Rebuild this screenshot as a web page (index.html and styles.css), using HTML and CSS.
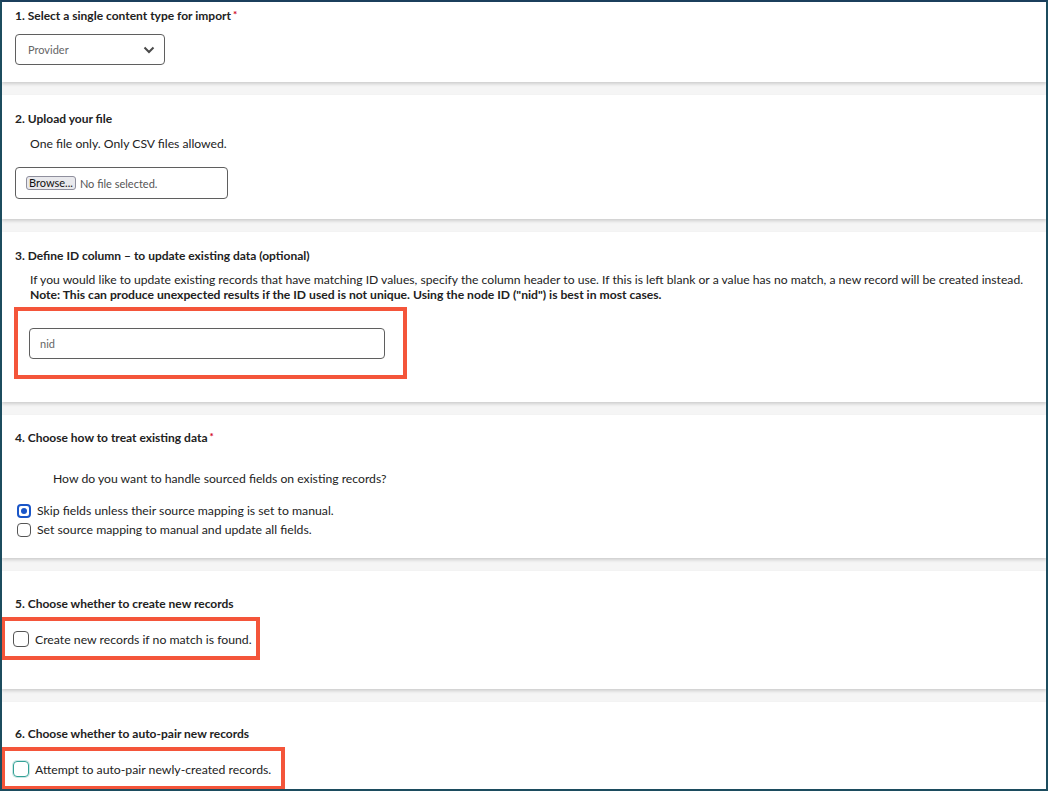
FILE: index.html
```html
<!DOCTYPE html>
<html lang="en">
<head>
  <meta charset="UTF-8">
  <title>Import content</title>
  <link rel="stylesheet" href="styles.css">
</head>
<body>
  <div class="frame">
    <section class="step step-1">
      <h2>1. Select a single content type for import<span class="req">*</span></h2>
      <div class="select">
        <span>Provider</span>
        <svg width="12" height="8" viewBox="0 0 12 8"><polyline points="1.5,1.5 6,6 10.5,1.5" fill="none" stroke="#4a4a4a" stroke-width="2"/></svg>
      </div>
    </section>

    <section class="step step-2">
      <h2>2. Upload your file</h2>
      <p class="help">One file only. Only CSV files allowed.</p>
      <div class="file">
        <span class="browse">Browse...</span>
        <span class="nofile">No file selected.</span>
      </div>
    </section>

    <section class="step step-3">
      <h2>3. Define ID column – to update existing data (optional)</h2>
      <p class="desc">If you would like to update existing records that have matching ID values, specify the column header to use. If this is left blank or a value has no match, a new record will be created instead.<br><strong>Note: This can produce unexpected results if the ID used is not unique. Using the node ID ("nid") is best in most cases.</strong></p>
      <div class="mark mark-input">
        <div class="text-input">nid</div>
      </div>
    </section>

    <section class="step step-4">
      <h2>4. Choose how to treat existing data<span class="req">*</span></h2>
      <p class="question">How do you want to handle sourced fields on existing records?</p>
      <label class="option"><span class="box radio checked"></span>Skip fields unless their source mapping is set to manual.</label>
      <label class="option"><span class="box radio"></span>Set source mapping to manual and update all fields.</label>
    </section>

    <section class="step step-5">
      <h2>5. Choose whether to create new records</h2>
      <div class="mark mark-check mark-create">
        <label class="option"><span class="box"></span>Create new records if no match is found.</label>
      </div>
    </section>

    <section class="step step-6">
      <h2>6. Choose whether to auto-pair new records</h2>
      <div class="mark mark-check mark-pair">
        <label class="option"><span class="box focus"></span>Attempt to auto-pair newly-created records.</label>
      </div>
    </section>
  </div>
</body>
</html>
```

FILE: styles.css
```css
html, body {
  margin: 0;
  padding: 0;
  background: #fff;
}
body {
  font-family: 'Lato', 'Liberation Sans', sans-serif;
  color: #222;
  width: 1049px;
  height: 791px;
  overflow: hidden;
}
.frame {
  box-sizing: border-box;
  width: 1048px;
  height: 791px;
  border: 2px solid #1c4c5e;
  border-top-color: #1b3f5c;
  background: #f5f5f5;
  overflow: hidden;
}
.step {
  background: #fff;
  padding: 0 13px;
  margin-bottom: 13px;
  box-sizing: border-box;
  box-shadow: 0 2px 3px rgba(0, 0, 0, 0.16);
}
.step h2 {
  font-size: 12px;
  line-height: 14px;
  font-weight: 700;
  margin: 0;
  color: #222;
}
.req {
  color: #d0021b;
  font-size: 10px;
  margin-left: 2px;
  vertical-align: 2px;
}
.step-1 {
  height: 80px;
  padding-top: 5px;
}
.select {
  margin-top: 11px;
  width: 150px;
  height: 31px;
  box-sizing: border-box;
  border: 1px solid #5f5f5f;
  border-radius: 4px;
  display: flex;
  align-items: center;
  justify-content: space-between;
  padding: 0 9px 0 12px;
  font-size: 11px;
  color: #666;
}
.step-2 {
  height: 124px;
  padding-top: 17px;
}
.help {
  font-size: 12.2px;
  line-height: 16px;
  margin: 10px 0 0 15px;
}
.file {
  margin-top: 15px;
  width: 213px;
  height: 32px;
  box-sizing: border-box;
  border: 1px solid #5f5f5f;
  border-radius: 4px;
  display: flex;
  align-items: center;
  padding-left: 10px;
  font-size: 11px;
}
.browse {
  background: #e9e9ed;
  border: 1px solid #8f8f9d;
  border-radius: 3px;
  padding: 0 2px;
  line-height: 12px;
  color: #111;
}
.nofile {
  margin-left: 4px;
  color: #555;
}
.step-3 {
  height: 170px;
  padding-top: 17px;
}
.desc {
  font-size: 12.15px;
  line-height: 15px;
  margin: 9px 0 0 15px;
}
.mark {
  border: 4px solid #f4553a;
  box-sizing: border-box;
}
.mark-input {
  margin: 5px 0 0 -1px;
  width: 393px;
  height: 72px;
  padding: 17px 0 0 11px;
}
.text-input {
  width: 356px;
  height: 31px;
  box-sizing: border-box;
  border: 1px solid #5f5f5f;
  border-radius: 4px;
  font-size: 11px;
  color: #666;
  line-height: 29px;
  padding-left: 10px;
}
.step-4 {
  height: 143px;
  padding-top: 14px;
}
.question {
  font-size: 12.2px;
  line-height: 16px;
  margin: 26px 0 14px 38px;
}
.option {
  display: flex;
  align-items: center;
  font-size: 12.25px;
  line-height: 19px;
  color: #222;
}
.step-4 .option {
  margin-left: 2px;
}
.box {
  width: 14px;
  height: 14px;
  box-sizing: border-box;
  border: 1px solid #555;
  border-radius: 4px;
  margin-right: 6px;
  flex: none;
  position: relative;
}
.box.checked {
  border: 2px solid #1a56c8;
}
.box.checked::after {
  content: "";
  position: absolute;
  left: 2px;
  top: 2px;
  width: 6px;
  height: 6px;
  border-radius: 50%;
  background: #1a56c8;
}
.box.focus {
  border-color: #33a196;
  box-shadow: 0 0 0 1px rgba(51, 161, 150, 0.25);
}
.step-5 {
  height: 118px;
  padding-top: 26px;
}
.mark-check {
  margin: 6px 0 0 -14px;
  height: 43px;
  display: flex;
  align-items: center;
  padding-left: 8px;
}
.mark-check .option {
  margin-top: 1px;
}
.mark-check .box {
  width: 16px;
  height: 16px;
}
.mark-create {
  width: 259px;
}
.mark-pair {
  width: 284px;
}
.step-6 {
  height: 120px;
  padding-top: 25px;
}
```
